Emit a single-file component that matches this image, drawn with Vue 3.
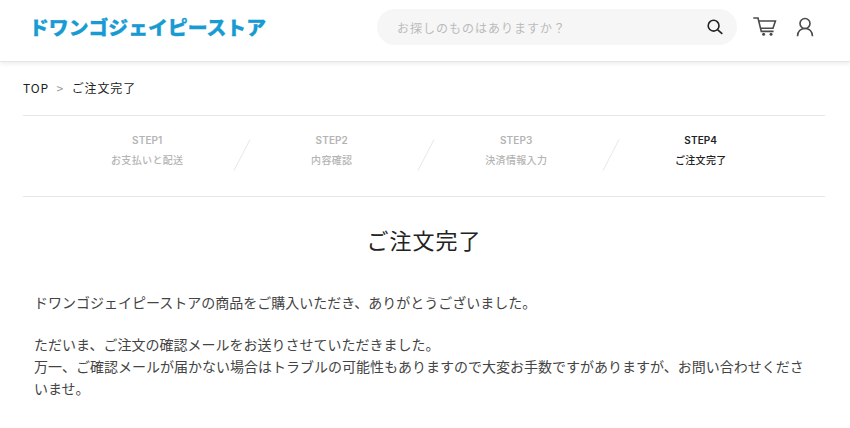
<script setup>
import { ref } from "vue";

const keyword = ref("");
const currentStep = 4;

const steps = [
  { no: 1, label: "お支払いと配送" },
  { no: 2, label: "内容確認" },
  { no: 3, label: "決済情報入力" },
  { no: 4, label: "ご注文完了" },
];
</script>

<template>
  <header class="header">
    <a class="logo">
      <svg width="240" height="30" viewBox="0 0 240 30">
        <text x="1" y="22" textLength="237" lengthAdjust="spacingAndGlyphs">ドワンゴジェイピーストア</text>
      </svg>
    </a>
    <form class="search" @submit.prevent>
      <input v-model="keyword" type="text" placeholder="お探しのものはありますか？" />
      <button type="submit" class="search-btn">
        <svg width="16" height="16" viewBox="0 0 16 16">
          <circle cx="6.6" cy="6.7" r="5.4" />
          <path d="M10.5 10.6L15.3 14.8" />
        </svg>
      </button>
    </form>
    <a class="cart">
      <svg width="24" height="20" viewBox="0 0 24 20">
        <path d="M0.3 1H5L8.3 14.4H20.6M6 4H22.4L20 11.2H7.8" />
        <circle class="wheel" cx="10.6" cy="17.3" r="1.5" />
        <circle class="wheel" cx="18" cy="17.3" r="1.5" />
      </svg>
    </a>
    <a class="user">
      <svg width="18" height="20" viewBox="0 0 18 20">
        <circle cx="9" cy="6.5" r="5" />
        <path d="M1.5 19.3C1.8 14.5 4.7 11.5 9 11.5S16.2 14.5 16.5 19.3" />
      </svg>
    </a>
  </header>

  <main class="main">
    <nav class="breadcrumb">
      <a>TOP</a>
      <span class="arrow">&gt;</span>
      <span class="here">ご注文完了</span>
    </nav>

    <div class="steps">
      <template v-for="step in steps" :key="step.no">
        <svg v-if="step.no > 1" class="slash" width="18" height="34" viewBox="0 0 18 34">
          <path d="M1 32.5L17 1.5" />
        </svg>
        <div class="step" :class="{ active: step.no === currentStep }">
          <span class="step-no">STEP{{ step.no }}</span>
          <span class="step-label">{{ step.label }}</span>
        </div>
      </template>
    </div>

    <h1 class="title">ご注文完了</h1>

    <div class="message">
      <p>ドワンゴジェイピーストアの商品をご購入いただき、ありがとうございました。</p>
      <p>
        ただいま、ご注文の確認メールをお送りさせていただきました。<br />
        万一、ご確認メールが届かない場合はトラブルの可能性もありますので大変お手数ですがありますが、お問い合わせくださいませ。
      </p>
    </div>
  </main>
</template>

<style>
body {
  background: #fff;
  color: #222;
  font-family: "Noto Sans CJK JP", sans-serif;
}
</style>

<style scoped>
.header {
  display: flex;
  align-items: flex-start;
  box-sizing: border-box;
  height: 62px;
  padding: 9px 36px 0 28px;
  border-bottom: 1px solid #e6e6e6;
  box-shadow: 0 2px 4px rgba(0, 0, 0, 0.07);
}

.logo {
  display: block;
  width: 240px;
  height: 30px;
  margin-top: 4px;
}

.logo text {
  fill: #189bd3;
  stroke: #189bd3;
  stroke-width: 0.3;
  font-size: 19px;
  font-weight: 900;
}

.search {
  display: flex;
  align-items: center;
  box-sizing: border-box;
  width: 360px;
  height: 36px;
  margin-left: 109px;
  padding: 0 14px 0 20px;
  border-radius: 18px;
  background: #f6f6f6;
}

.search input {
  flex: 1;
  min-width: 0;
  padding: 0;
  border: 0;
  outline: 0;
  background: transparent;
  font-family: inherit;
  font-size: 12px;
  letter-spacing: 1px;
}

.search input::placeholder {
  color: #bbb;
}

.search-btn {
  width: 16px;
  height: 16px;
  padding: 0;
  border: 0;
  background: none;
}

svg {
  display: block;
  overflow: visible;
}

.search-btn svg,
.cart svg,
.user svg {
  fill: none;
  stroke: #222;
  stroke-width: 1.6;
}

.cart {
  margin: 8px 0 0 16px;
}

.cart svg,
.user svg {
  stroke: #4a4a4a;
}

.cart .wheel {
  fill: #4a4a4a;
  stroke: none;
}

.user {
  margin: 8px 0 0 19px;
}

.main {
  padding: 0 25px 0 23px;
}

.breadcrumb {
  display: flex;
  align-items: center;
  box-sizing: border-box;
  height: 53px;
  padding-bottom: 2px;
  font-size: 12px;
  letter-spacing: 0.9px;
}

.arrow {
  margin: 0 7.5px;
  color: #999;
}

.steps {
  display: flex;
  box-sizing: border-box;
  height: 82px;
  padding: 16px 32px 0;
  border-top: 1px solid #e8e8e8;
  border-bottom: 1px solid #e8e8e8;
}

.step {
  display: flex;
  flex: 1;
  flex-direction: column;
  align-items: center;
  color: #b4b4b4;
}

.step.active {
  color: #222;
}

.step-no {
  font-family: Inter, sans-serif;
  font-size: 10px;
  font-weight: 600;
  line-height: 16px;
  letter-spacing: 0.1px;
}

.step-label {
  margin-top: 4px;
  font-size: 10px;
  font-weight: 500;
  line-height: 16px;
  letter-spacing: 0.35px;
}

.slash {
  margin: 6px -11px 0 -7px;
  fill: none;
  stroke: #e8e8e8;
  stroke-width: 1;
}

.title {
  margin: 25px 0 0;
  font-size: 22px;
  font-weight: 400;
  line-height: 34px;
  letter-spacing: 1px;
  text-align: center;
}

.message {
  padding: 35px 11px 0;
  color: #444;
  font-size: 14px;
  line-height: 22px;
}

.message p {
  margin: 0 0 20px;
}
</style>
